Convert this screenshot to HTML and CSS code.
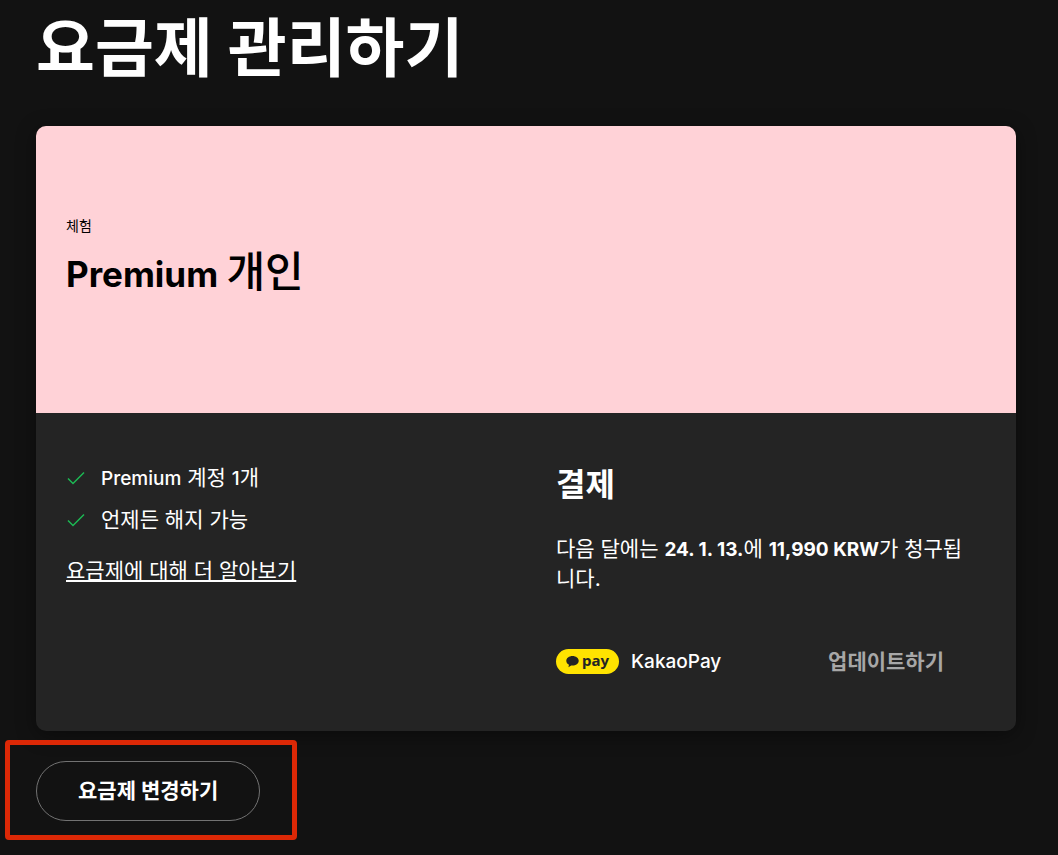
FILE: index.html
```html
<!DOCTYPE html>
<html lang="ko">

<head>
	<meta charset="UTF-8">
	<meta name="viewport" content="width=device-width, initial-scale=1.0">
	<title>요금제 관리하기</title>
	<link rel="stylesheet" href="styles.css">
</head>

<body>
	<main>
		<h1>요금제 관리하기</h1>

		<section class="card">
			<header class="plan">
				<p class="plan-type">체험</p>
				<h2 class="plan-name"><span class="brand">Premium </span>개인</h2>
			</header>

			<div class="details">
				<div class="column">
					<ul class="features">
						<li>
							<svg class="check" viewBox="0 0 20 20" aria-hidden="true"><path d="M2 10.5 L7 15.5 L18 4.5" /></svg>
							<span><span class="latin">Premium</span> 계정 <span class="latin">1</span>개</span>
						</li>
						<li>
							<svg class="check" viewBox="0 0 20 20" aria-hidden="true"><path d="M2 10.5 L7 15.5 L18 4.5" /></svg>
							<span>언제든 해지 가능</span>
						</li>
					</ul>
					<a class="more" href="#">요금제에 대해 더 알아보기</a>
				</div>

				<div class="column">
					<h3>결제</h3>
					<p class="billing">다음 달에는 <b>24. 1. 13.</b>에 <b>11,990 KRW</b>가 청구됩<wbr>니다.</p>
					<div class="payment">
						<span class="kakao">
							<svg class="bubble" viewBox="0 0 14 13" aria-hidden="true"><path d="M7 0.5 C3.2 0.5 0.3 2.8 0.3 5.7 C0.3 7.6 1.5 9.2 3.2 10.1 L2.6 12.6 L5.6 10.8 C10 11.4 13.7 9 13.7 5.7 C13.7 2.8 10.8 0.5 7 0.5 Z" /></svg>
							<span class="pay">pay</span>
						</span>
						<span class="method latin">KakaoPay</span>
						<button class="update" type="button">업데이트하기</button>
					</div>
				</div>
			</div>
		</section>

		<div class="highlight">
			<button class="change" type="button">요금제 변경하기</button>
		</div>
	</main>
</body>

</html>
```
FILE: styles.css
```css
* {
	box-sizing: border-box;
}

body {
	margin: 0;
	background-color: #121212;
	color: #fff;
	font-family: Inter, "Noto Sans CJK KR", sans-serif;
	font-size: 21px;
	line-height: 29px;
}

main {
	padding: 0 42px 0 36px;
}

h1,
h2,
h3,
p,
ul {
	margin: 0;
	padding: 0;
}

h1 {
	padding: 8px 0 38px;
	font-size: 64px;
	line-height: 80px;
}

.card {
	border-radius: 10px;
	overflow: hidden;
	background-color: #242424;
	box-shadow: 0 4px 20px rgba(0, 0, 0, 0.4);
}

.plan {
	padding: 89px 30px 111px;
	background-color: #ffd2d7;
	color: #000;
}

.plan-type {
	font-size: 14px;
	line-height: 21px;
}

.plan-name {
	padding-top: 8px;
	font-size: 42px;
	font-weight: 500;
	line-height: 56px;
}

.brand {
	font-size: 35px;
	font-weight: 700;
}

/* latin letters run wider than hangul at the same size */
.latin,
b {
	font-size: 19px;
}

.latin {
	font-weight: 500;
}

.details {
	display: flex;
}

.column {
	flex: 1;
	padding: 50px 30px 55px;
}

.features {
	list-style: none;
}

.features li {
	display: flex;
	align-items: center;
	gap: 15px;
	margin-bottom: 12px;
}

.check {
	width: 20px;
	height: 20px;
	fill: none;
	stroke: #1db954;
	stroke-width: 1.5;
}

.more {
	display: inline-block;
	padding-top: 10px;
	color: #fff;
}

h3 {
	font-size: 32px;
	line-height: 44px;
}

.billing {
	padding: 27px 18px 54px 0;
}

.payment {
	display: flex;
	align-items: center;
}

.kakao {
	display: flex;
	align-items: center;
	gap: 3px;
	height: 25px;
	padding: 0 10px;
	border-radius: 13px;
	background-color: #ffe300;
	color: #242424;
}

.pay {
	padding-bottom: 3px;
	font-family: "Noto Sans", sans-serif;
	font-size: 15px;
	font-weight: 700;
}

.bubble {
	width: 13px;
	height: 13px;
	fill: #242424;
}

.method {
	margin-left: 12px;
}

button {
	font-family: inherit;
	font-size: 21px;
	font-weight: 700;
	line-height: 28px;
	background-color: transparent;
	cursor: pointer;
}

.update {
	margin-left: auto;
	padding: 0 42px;
	border: none;
	color: #a7a7a7;
}

.highlight {
	width: fit-content;
	margin: 9px 0 0 -31px;
	padding: 16px 32px 14px 26px;
	border: 5px solid #dc2806;
	border-radius: 4px;
}

.change {
	padding: 15px 41px;
	border: 1px solid #727272;
	border-radius: 30px;
	color: #fff;
}
```
